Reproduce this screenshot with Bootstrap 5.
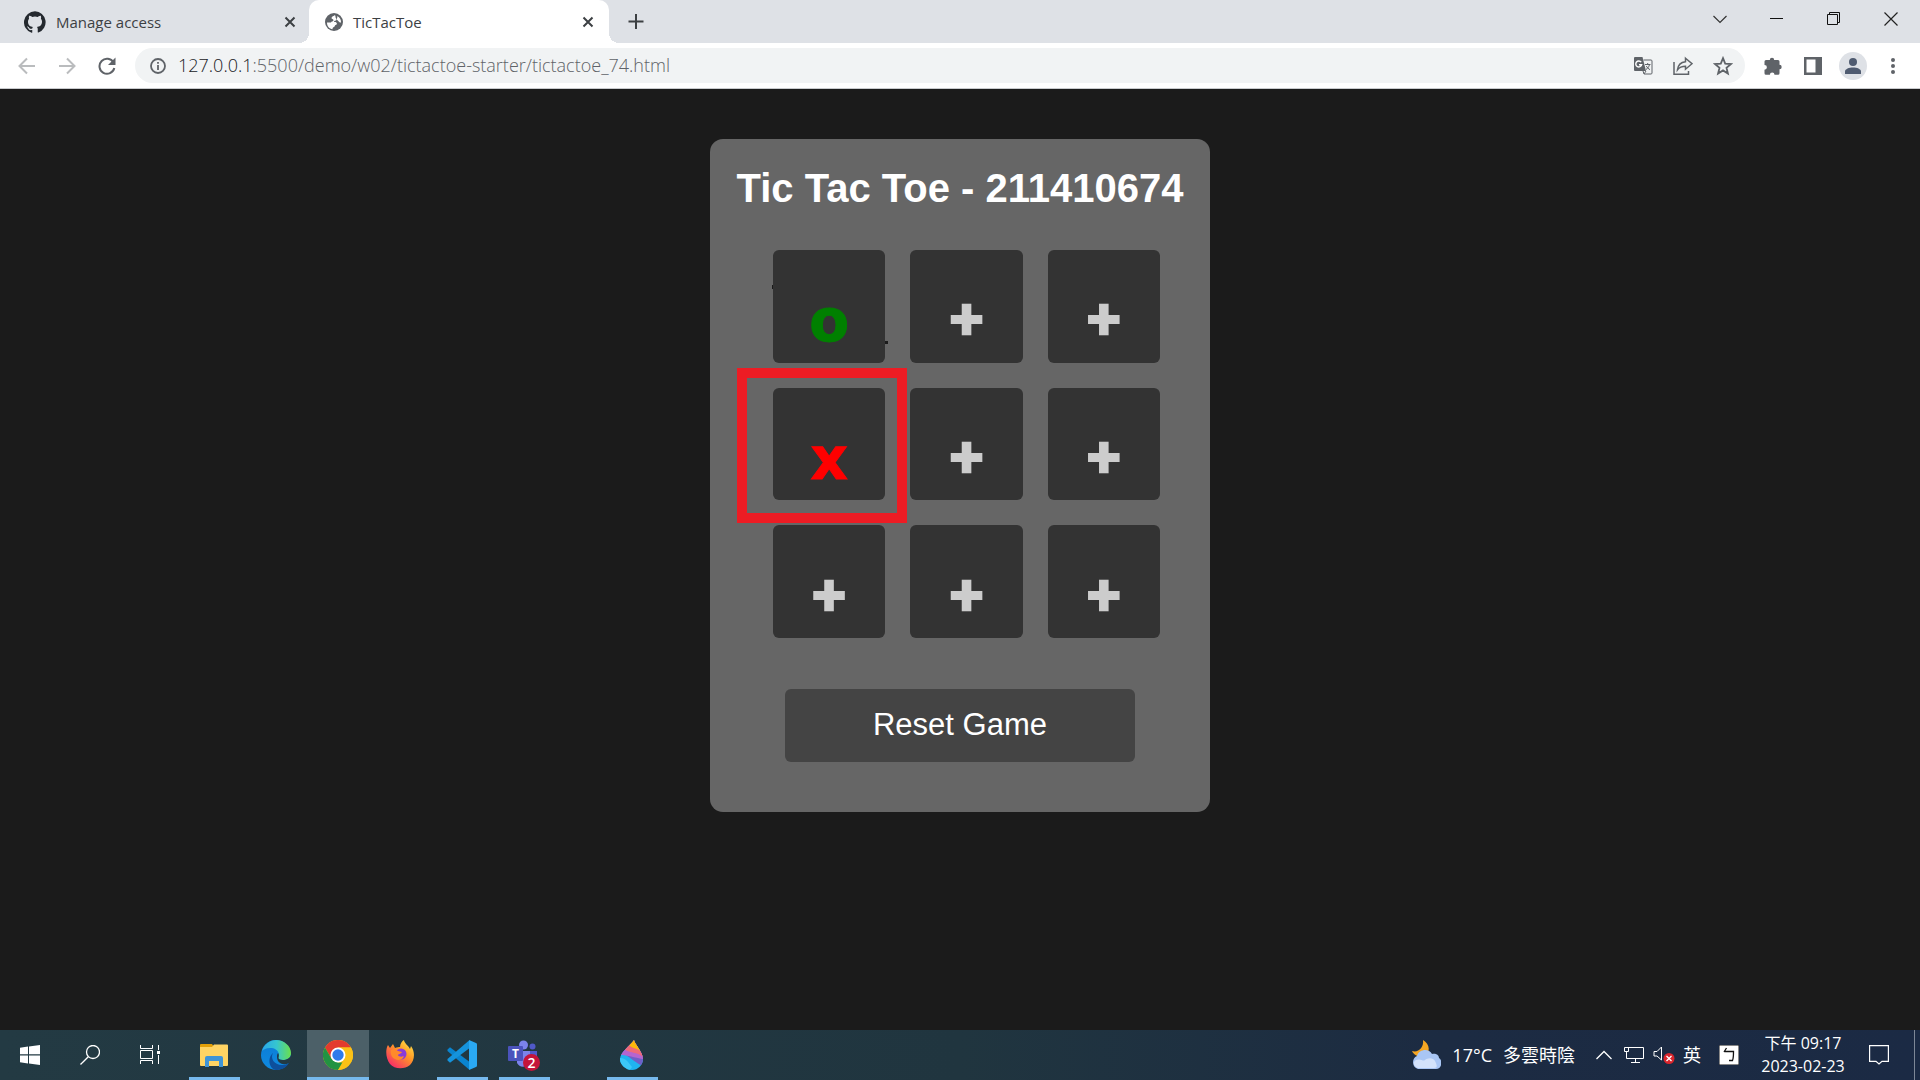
<!DOCTYPE html>
<html lang="zh-Hant">
<head>
<meta charset="utf-8">
<meta name="viewport" content="width=device-width, initial-scale=1">
<title>TicTacToe</title>
<link href="https://cdn.jsdelivr.net/npm/bootstrap@5.3.0/dist/css/bootstrap.min.css" rel="stylesheet">
<style>
body { font-family: "Open Sans", "Noto Sans CJK TC", sans-serif; background: #1b1b1b; }
svg { display: block; flex: none; }
button, .plain-link { border: 0; background: none; padding: 0; color: inherit; text-decoration: none; }

/* browser frame */
.tab-strip { background: #dee1e6; height: 43px; color: #3c4043; padding-right: 1px; }
.browser-tab { font-size: 15px; line-height: 20px; font-weight: 370; gap: 10px; }
.tab-idle { width: 309px; padding: 0 10px 0 24px; }
.tab-active { width: 300px; padding: 0 12px 0 16px; background: #fff; border-radius: 10px 10px 0 0; position: relative; }
.tab-active::before, .tab-active::after { content: ""; position: absolute; bottom: 0; width: 10px; height: 10px; }
.tab-active::before { left: -10px; background: radial-gradient(circle at 0 0, #dee1e6 10px, #fff 10px); }
.tab-active::after { right: -10px; background: radial-gradient(circle at 100% 0, #dee1e6 10px, #fff 10px); }
.win-btn { width: 57px; height: 37px; color: #111; }
.tool-row { height: 46px; background: #fff; border-bottom: 1px solid #c9cbce; padding: 0 7px; color: #5f6368; }
.tool-btn { width: 40px; height: 35px; }
.address-bar { height: 35px; border-radius: 18px; background: #f1f3f4; margin-left: 8px; padding: 0 2px 0 15px; font-size: 18px; line-height: 24px; font-weight: 360; }
.address-bar a { padding-bottom: 2px; }
.host-part { color: #202124; }
.avatar { width: 28px; height: 28px; border-radius: 50%; background: #dee1e6; }

/* game */
.game-card { width: 500px; margin-top: 50px; padding: 24px 25px 50px; background: #666; border-radius: 13px; font-family: "Liberation Sans", Arial, sans-serif; }
.game-title { font-size: 40px; line-height: 50px; font-weight: 700; margin: 0 0 37px; white-space: nowrap; }
.board { display: grid; grid-template-columns: repeat(3, 1fr); grid-auto-rows: 1fr; gap: 25px; width: 387px; height: 388px; margin: 0 25px 0 38px; }
.cell { background: #333; border-radius: 6px; color: #ccc; font: 900 60px/60px Inter, sans-serif; padding-top: 18px; position: relative; }
.cell-o, .cell-x { font: 700 58px/60px "DejaVu Sans", sans-serif; padding-top: 30px; -webkit-text-stroke: 1px currentColor; }
.cell-o { color: green; }
.cell-x { color: red; }
.cell-o::before, .cell-o::after { content: ""; position: absolute; background: #1b1b1b; }
.cell-o::before { left: -1px; top: 35px; width: 1px; height: 4px; }
.cell-o::after { right: -3px; top: 91px; width: 3px; height: 3px; }
.highlight { position: absolute; left: -36px; top: -20px; width: 170px; height: 155px; border: 10px solid #ed1c24; z-index: 2; pointer-events: none; }
.reset-btn { width: 350px; height: 73px; margin-top: 51px; background: #444; color: #fff; border-radius: 6px; font-size: 31px; }

/* taskbar */
.taskbar { height: 50px; background: linear-gradient(90deg, #233a43 0%, #20353f 50%, #1c2b42 75%, #1b2a44 100%); color: #fff; }
.sys-btn { width: 60px; height: 50px; }
.app-list { margin-left: 3px; }
.app-btn { width: 62px; height: 50px; position: relative; }
.app-far { margin-left: 46px; }
.app-open::after { content: ""; position: absolute; bottom: 0; left: 6px; right: 5px; height: 3px; background: #76b9ed; }
.app-current { background: #4c6068; }
.app-current::after { left: 0; right: 0; }
.tray { font-size: 18px; line-height: 24px; }
.weather { gap: 11px; margin-right: 21px; }
.net-icon { margin: 0 8px 0 11px; }
.ime { gap: 18px; margin: 0 14px 0 8px; }
.clock { width: 100px; font-size: 16px; line-height: 23px; }
.notify { margin: 0 25px 0 16px; }
.desktop-edge { width: 6px; height: 50px; border-left: 1px solid #7d8796; }
</style>
<script src="https://cdn.jsdelivr.net/npm/bootstrap@5.3.0/dist/js/bootstrap.bundle.min.js"></script>
</head>
<body class="d-flex flex-column vh-100 overflow-hidden">

<header>
  <div class="tab-strip d-flex">
    <div class="browser-tab tab-idle d-flex align-items-center">
      <svg width="22" height="22" viewBox="0 0 16 16" fill="#24292f"><path d="M8 .2a8 8 0 0 0-2.500 15.600c.4.100.5-.2.5-.4v-1.500c-2 .4-2.500-.5-2.700-1-.1-.2-.5-.9-.8-1.100-.3-.2-.7-.5 0-.5.6 0 1.100.6 1.200.8.7 1.200 1.900.9 2.300.7.1-.5.300-.9.500-1.100-1.800-.2-3.600-.9-3.600-4 0-.9.300-1.600.8-2.100-.1-.2-.4-1 .1-2.100 0 0 .7-.2 2.200.8a7.400 7.400 0 0 1 4 0c1.500-1 2.200-.8 2.200-.8.4 1.100.2 1.900.1 2.100.5.600.8 1.300.8 2.100 0 3.100-1.900 3.700-3.700 3.900.3.3.6.8.6 1.500v2.200c0 .2.100.5.500.4A8 8 0 0 0 8 .2z"/></svg>
      <span class="flex-grow-1">Manage access</span>
      <button aria-label="Close tab" class="d-flex justify-content-center"><svg width="18" height="18" viewBox="0 0 18 18" stroke="#3c4043" stroke-width="2"><path d="M4.500 4.500l9 9M13.500 4.500l-9 9"/></svg></button>
    </div>
    <div class="browser-tab tab-active d-flex align-items-center">
      <svg width="18" height="18" viewBox="0 0 18 18"><circle cx="9" cy="9" r="9" fill="#5f6368"/><path d="M10 2c-1 1-3.500 1.500-3.500 3 0 1.200 2 .8 2 2.200S6 8.200 6 9.500H2c0 4 2.500 6.300 5.500 6.700 0-1.700.5-1.700 1.500-2.200s.5-1.500 1.500-2 2-1 1-2.300S9 9.500 9 8.500s2-.5 2.500-1.500S10 4.500 10.500 3.500z" fill="#fff"/><path d="M12.300 2.900a7 7 0 0 1 3.700 6.500c-1.200 0-2-.2-2.500-1.200s-1.500-.7-1.700-1.700.9-2 .5-3.600z" fill="#fff"/></svg>
      <span class="flex-grow-1">TicTacToe</span>
      <button aria-label="Close tab"><svg width="18" height="18" viewBox="0 0 18 18" stroke="#3c4043" stroke-width="2"><path d="M4.500 4.500l9 9M13.500 4.500l-9 9"/></svg></button>
    </div>
    <button aria-label="New tab" class="ms-3"><svg width="22" height="22" viewBox="0 0 22 22" stroke="#3c4043" stroke-width="2"><path d="M11 3v15M3.500 10.500h15"/></svg></button>
    <div class="d-flex ms-auto">
      <button class="win-btn d-flex align-items-center justify-content-center" aria-label="Search tabs"><svg width="14" height="14" viewBox="0 0 14 14" fill="none" stroke="#333" stroke-width="1.200"><path d="M.5 4l6.500 6.500L13.500 4"/></svg></button>
      <button class="win-btn d-flex align-items-center justify-content-center" aria-label="Minimize"><svg width="13" height="13" viewBox="0 0 13 13" stroke="#111"><path d="M0 6.500h13"/></svg></button>
      <button class="win-btn d-flex align-items-center justify-content-center" aria-label="Restore"><svg width="14" height="14" viewBox="0 0 14 14" fill="none" stroke="#111"><path d="M.5 2.500h10v10H.5zM2.500 2.500v-2h10v10h-2"/></svg></button>
      <button class="win-btn d-flex align-items-center justify-content-center" aria-label="Close"><svg width="14" height="14" viewBox="0 0 14 14" stroke="#222" stroke-width="1.200"><path d="M.5.5l13 13M13.500.5l-13 13"/></svg></button>
    </div>
  </div>

  <div class="tool-row d-flex align-items-center">
    <button class="tool-btn d-flex align-items-center justify-content-center" aria-label="Back"><svg width="18" height="18" viewBox="0 0 18 18" fill="none" stroke="#babcbe" stroke-width="2"><path d="M17 9H2M9 1.500L1.500 9 9 16.500"/></svg></button>
    <button class="tool-btn d-flex align-items-center justify-content-center" aria-label="Forward"><svg width="18" height="18" viewBox="0 0 18 18" fill="none" stroke="#babcbe" stroke-width="2"><path d="M1 9h15M9 1.500L16.500 9 9 16.500"/></svg></button>
    <button class="tool-btn d-flex align-items-center justify-content-center" aria-label="Reload"><svg width="18" height="18" viewBox="0 0 18 18"><path d="M15.500 5.500A7.500 7.500 0 1 0 16.300 11" fill="none" stroke="#5f6368" stroke-width="2"/><path d="M17.500.5v7.500H10z" fill="#5f6368"/></svg></button>
    <div class="address-bar d-flex align-items-center flex-grow-1">
      <svg width="16" height="16" viewBox="0 0 16 16"><circle cx="8" cy="8" r="7" fill="none" stroke="#5f6368" stroke-width="1.800"/><path d="M7.100 7h1.800v5H7.100zM7.100 4h1.800v1.800H7.100z" fill="#5f6368"/></svg>
      <a href="#" class="plain-link flex-grow-1 ms-2 ps-1"><span class="host-part">127.0.0.1</span>:5500/demo/w02/tictactoe-starter/tictactoe_74.html</a>
      <button class="tool-btn d-flex align-items-center justify-content-center" aria-label="Translate"><svg width="20" height="20" viewBox="0 0 20 20"><path d="M2 1h7.500l3.500 14H2a1 1 0 0 1-1-1V2a1 1 0 0 1 1-1z" fill="#5f6368"/><path d="M10.500 4H18a1 1 0 0 1 1 1v12a1 1 0 0 1-1 1h-7l2-3M11 18l-1-3" fill="none" stroke="#5f6368"/><path d="M8.200 6.200a3 3 0 1 0 .5 2.500H6" fill="none" stroke="#fff" stroke-width="1.400"/><path d="M12 8.500h5.500M14.700 7v1.500M16.500 8.500c-.5 2.500-2 4-3.500 5M13.300 10c.8 1.700 2 2.800 3.700 3.700" fill="none" stroke="#5f6368"/></svg></button>
      <button class="tool-btn d-flex align-items-center justify-content-center" aria-label="Share"><svg width="20" height="20" viewBox="0 0 20 20" fill="none" stroke="#5f6368" stroke-width="1.500"><path d="M1 6v12.200h14.500V15"/><path d="M12.500 2.200l6.500 5.500-6.500 5.500v-3c-3.500 0-6 .8-8 3.500.5-4.500 3.500-7.500 8-8z"/></svg></button>
      <button class="tool-btn d-flex align-items-center justify-content-center" aria-label="Bookmark"><svg width="20" height="20" viewBox="0 0 20 20" fill="none" stroke="#5f6368" stroke-width="1.800"><path d="M10 2.200l2.200 5.400 5.800.4-4.500 3.800 1.400 5.700-4.900-3.100-4.900 3.100 1.400-5.700L2 8l5.800-.4z"/></svg></button>
    </div>
    <div class="d-flex ps-2">
      <button class="tool-btn d-flex align-items-center justify-content-center" aria-label="Extensions"><svg width="20" height="20" viewBox="0 0 20 20" fill="#5f6368"><path d="M1.500 5.500a1.500 1.500 0 0 1 1.500-1.500h3.800a2.200 2.200 0 1 1 4.400 0H15a1.500 1.500 0 0 1 1.500 1.500v3.300a2.200 2.200 0 1 1 0 4.400v4a1.500 1.500 0 0 1-1.500 1.500h-3.500a2.300 2.300 0 0 0-4.600 0H3a1.500 1.500 0 0 1-1.500-1.500v-3.500a2.400 2.400 0 0 0 0-4.800z"/></svg></button>
      <button class="tool-btn d-flex align-items-center justify-content-center" aria-label="Side panel"><svg width="18" height="18" viewBox="0 0 18 18"><path d="M0 0h18v18H0zM2.500 2.500v13h9v-13z" fill="#5f6368" fill-rule="evenodd"/></svg></button>
      <button class="tool-btn d-flex align-items-center justify-content-center" aria-label="Profile"><span class="avatar d-flex align-items-center justify-content-center"><svg width="16" height="16" viewBox="0 0 16 16" fill="#4f5b70"><circle cx="8" cy="4" r="4"/><path d="M0 16v-2.500c0-2.500 4-4 8-4s8 1.500 8 4V16z"/></svg></span></button>
      <button class="tool-btn d-flex align-items-center justify-content-center" aria-label="Menu"><svg width="4" height="18" viewBox="0 0 4 18" fill="#5f6368"><circle cx="2" cy="3" r="2"/><circle cx="2" cy="9" r="2"/><circle cx="2" cy="15" r="2"/></svg></button>
    </div>
  </div>
</header>

<main class="flex-grow-1">
  <section class="game-card mx-auto text-white text-center">
    <h1 class="game-title d-flex justify-content-center">Tic Tac Toe - 211410674</h1>
    <div class="board">
      <button class="cell cell-o">o</button>
      <button class="cell">+</button>
      <button class="cell">+</button>
      <button class="cell cell-x">x<span class="highlight"></span></button>
      <button class="cell">+</button>
      <button class="cell">+</button>
      <button class="cell">+</button>
      <button class="cell">+</button>
      <button class="cell">+</button>
    </div>
    <button class="reset-btn">Reset Game</button>
  </section>
</main>

<footer class="taskbar d-flex align-items-center">
  <button class="sys-btn d-flex align-items-center justify-content-center" aria-label="Start"><svg width="20" height="20" viewBox="0 0 20 20" fill="#fff"><path d="M0 2.800L8 1.500v7.800H0zM9 1.400L20 0v9.300H9zM0 10.500h8v7.900l-8-1.200zM9 10.500h11V20L9 18.500z"/></svg></button>
  <button class="sys-btn d-flex align-items-center justify-content-center" aria-label="Search"><svg width="20" height="20" viewBox="0 0 20 20" fill="none" stroke="#fff" stroke-width="1.300"><circle cx="13" cy="7" r="6.500"/><path d="M8.300 11.700L.5 19.500"/></svg></button>
  <button class="sys-btn d-flex align-items-center justify-content-center" aria-label="Task view"><svg width="20" height="20" viewBox="0 0 20 20" fill="none" stroke="#fff"><path d="M.5 0v3.500h12V0M.5 5.500h12v8H.5zM.5 19v-3.500h12V19M18.500 0v5M18.500 10v9"/><path d="M17 6h3v3h-3z" fill="#fff" stroke="none"/></svg></button>
  <div class="app-list d-flex">
  <button class="app-btn app-open d-flex align-items-center justify-content-center" aria-label="File Explorer"><svg width="28" height="24" viewBox="0 0 28 24"><path d="M0 2a1 1 0 0 1 1-1h11l2 3H0z" fill="#e3a008"/><path d="M0 4h12l2-2.500h13a1 1 0 0 1 1 1V22a1 1 0 0 1-1 1H1a1 1 0 0 1-1-1z" fill="#ffd463"/><path d="M5 24V15a2 2 0 0 1 2-2h14a2 2 0 0 1 2 2v9h-4v-6H9v6z" fill="#3f94d6"/></svg></button>
  <button class="app-btn d-flex align-items-center justify-content-center" aria-label="Edge"><svg width="30" height="30" viewBox="0 0 30 30"><defs><linearGradient id="edgeTop"><stop stop-color="#2aa7e8"/><stop offset=".5" stop-color="#35c5d0"/><stop offset="1" stop-color="#6be04c"/></linearGradient><linearGradient id="edgeLow" x2="0" y2="1"><stop stop-color="#0c7bd6"/><stop offset="1" stop-color="#0f8ae0"/></linearGradient></defs><circle cx="15" cy="15" r="15" fill="url(#edgeLow)"/><path d="M1 11C3 4 9 0 15 0c8 0 15 6 15 13 0 5-4 7-8 7-3 0-5-1-4.500-2.500C19 14 17 9 11 8 6 7.500 2.500 9 1 11z" fill="url(#edgeTop)"/><path d="M12 13c-3 5 1 12 9 12 3 0 5-1 7-2-3 5-8 7-13 7C8 29 6 18 12 13z" fill="#0d4f9c"/><path d="M17.500 17.500c-.5 1.500 1.500 2.500 4.500 2.500 3.500 0 7-1.500 8-5v5l-2 3c-6 3-12 0-12-6 0-1 0-3 1-4 1 1 1 3 .5 4.500z" fill="#233a43"/></svg></button>
  <button class="app-btn app-open app-current d-flex align-items-center justify-content-center" aria-label="Chrome"><svg width="30" height="30" viewBox="0 0 30 30"><circle cx="15" cy="15" r="15" fill="#fbc116"/><path d="M2 7.500A15 15 0 0 1 28 7.500H15l-6.500 11.300z" fill="#e33b2e"/><path d="M2 7.500l6.500 11.300L15 22.500h6.500L15 30A15 15 0 0 1 2 7.500z" fill="#229342"/><path d="M21.500 18.800L15 30A15 15 0 0 0 28 7.500H15l6.500 3.500z" fill="#fbc116"/><circle cx="15" cy="15" r="7.500" fill="#fff"/><circle cx="15" cy="15" r="5.700" fill="#2f7bea"/></svg></button>
  <button class="app-btn d-flex align-items-center justify-content-center" aria-label="Firefox"><svg width="30" height="30" viewBox="0 0 30 30"><defs><linearGradient id="fox" x1="1" y1="0" x2=".2" y2="1"><stop stop-color="#fff14f"/><stop offset=".45" stop-color="#ff9a26"/><stop offset="1" stop-color="#f5246c"/></linearGradient></defs><path d="M3 5l2 3 3-4 2 4c2-1 4-1 5-1 0-3 2-6 4-7 0 3 4 5 6 9l1-3c5 7 3 15-1 19-6 5-16 4-20-1S0 10 3 5z" fill="url(#fox)"/><circle cx="16" cy="14" r="5.500" fill="#8a3bd8"/><path d="M6 10c3-2 6 0 7 1l4 1c-1 2-4 2-4 3 0 2 5 2 6 1-1 4-6 5-9 3-3-1-5-5-4-9z" fill="#ff8a2a"/></svg></button>
  <button class="app-btn app-open d-flex align-items-center justify-content-center" aria-label="Visual Studio Code"><svg width="30" height="30" viewBox="0 0 30 30"><path d="M.5 9.500L3 7.200 22 21.500v8L.5 11z" fill="#0a84cf"/><path d="M.5 20.500L3 22.800 22 8.500v-8L.5 19z" fill="#1593dc"/><path d="M22 0l7 3a1.500 1.500 0 0 1 1 1.400v21.200a1.500 1.500 0 0 1-1 1.400l-7 3z" fill="#2aa9f3"/></svg></button>
  <button class="app-btn app-open d-flex align-items-center justify-content-center" aria-label="Teams, 2 notifications"><svg width="32" height="32" viewBox="0 0 32 32"><circle cx="15.500" cy="6" r="4.500" fill="#7b83eb"/><circle cx="24.500" cy="7.500" r="3" fill="#5059c9"/><path d="M17 12h12v8a6 6 0 0 1-8 5z" fill="#5059c9"/><path d="M9 12h13v10a7 7 0 0 1-13 2z" fill="#7b83eb"/><rect y="7" width="15" height="15" rx="1" fill="#4b53bc"/><text x="7.500" y="18.500" fill="#fff" font-size="12" font-weight="700" text-anchor="middle">T</text><circle cx="23.500" cy="23.500" r="8.500" fill="#c4143a"/><text x="23.500" y="28.500" fill="#fff" font-size="14" font-weight="600" text-anchor="middle">2</text></svg></button>
  <button class="app-btn app-open app-far d-flex align-items-center justify-content-center" aria-label="Paint 3D"><svg width="24" height="30" viewBox="0 0 24 30"><defs><clipPath id="drop"><path d="M14 0c1 5 9 12 9 19 0 6-5 11-11 11S0 25 0 19C0 12 10 6 14 0z"/></clipPath></defs><g clip-path="url(#drop)"><path d="M0 0h24v30H0z" fill="#20b4f0"/><path d="M0 13c8 1 12 8 24 14V0H0z" fill="#6f5fc8"/><path d="M0 15c8 0 15 3 24 4V0L4 4z" fill="#b565cf"/><path d="M4 9c7 5 13 2 20 9V0H4z" fill="#ef6a78"/><path d="M8 4c4 5 8 3 15 9V0H8z" fill="#fcb90a"/><path d="M0 18c6 0 9 5 12 9l-2 3H0z" fill="#3cc8f7"/></g></svg></button>
  </div>

  <div class="tray d-flex align-items-center ms-auto">
    <div class="weather d-flex align-items-center">
      <svg width="30" height="30" viewBox="0 0 30 30"><path d="M12 0c7 4 8 13 1 16C8 18 3 15 1 11c6 2 12-3 11-11z" fill="#f5a623"/><path d="M7 29a7 7 0 0 1-1-13c2-7 12-8 15-2 5-1 7 2 7 4 4 2 3 11-3 11z" fill="#a9c6f5"/><path d="M7 28c-4-1-6-6-2-8 5-2 7 2 9 0s8-3 10 1 3 7-1 7z" fill="#d3e2fb"/></svg>
      <span>17°C</span><span>多雲時陰</span>
    </div>
    <svg width="16" height="10" viewBox="0 0 16 10" fill="none" stroke="#fff" stroke-width="1.300"><path d="M.5 9L8 1.500 15.500 9"/></svg>
    <svg class="net-icon" width="22" height="18" viewBox="0 0 22 18" fill="none" stroke="#fff"><path d="M5 1.500h15.500v11H3.500V8M12.500 13v3M8 16.500h9M1.500 1.500h4v4h-4zM3.500 5.500V8"/></svg>
    <svg width="22" height="18" viewBox="0 0 22 18"><path d="M1 5.500h3L8.500 1v13L4 10H1z" fill="none" stroke="#fff"/><circle cx="16" cy="12.500" r="5.500" fill="#d9252c"/><path d="M13.500 10l5 5M18.500 10l-5 5" stroke="#fff" stroke-width="1.300"/></svg>
    <div class="ime d-flex align-items-center">
      <span>英</span>
      <svg width="20" height="20" viewBox="0 0 20 20"><rect width="20" height="20" fill="#fff" stroke="#111"/><path d="M7.500 3L5 7M5 6.500h9.500c0 4 0 7-1 9H10" fill="none" stroke="#111" stroke-width="1.300"/></svg>
    </div>
    <div class="clock text-center"><div>下午 09:17</div><div>2023-02-23</div></div>
    <button class="notify" aria-label="Notifications"><svg width="20" height="20" viewBox="0 0 20 20" fill="none" stroke="#fff" stroke-width="1.200"><path d="M.6.6h18.800v15.800h-6.400l-3 2.600-3-2.600H.6z"/></svg></button>
    <span class="desktop-edge"></span>
  </div>
</footer>
</body>
</html>
